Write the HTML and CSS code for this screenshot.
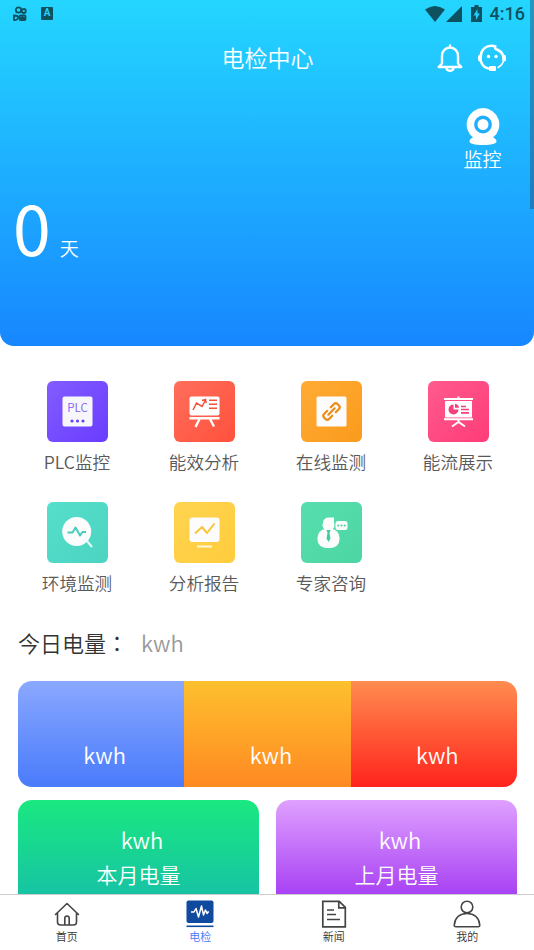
FILE: index.html
```html
<!DOCTYPE html>
<html lang="zh-CN">
<head>
  <meta charset="UTF-8" />
  <title>电检中心</title>
  <link rel="stylesheet" href="styles.css">
</head>
<body>
  <div class="scrollbar"></div>
  <main>
    <section class="hero">
      <div class="status">
        <svg class="status-app" viewBox="0 0 16 18" fill="none" stroke="#0e5261" stroke-width="1.8">
          <circle cx="6.5" cy="5" r="2.7"/><circle cx="11.8" cy="6" r="2"/>
          <rect x="7.5" y="10.5" width="6" height="4.5" rx="1"/><path d="M2 10.5q5 0 4 2.5t-4 2zM7 13h7M10.5 10.5v4"/>
        </svg>
        <span class="status-a">A</span>
        <svg class="status-wifi" viewBox="0 0 20 16"><path fill="#0e5261" d="M0 3.5Q10-3.5 20 3.5L10 16z"/></svg>
        <svg class="status-signal" viewBox="0 0 16 16"><path fill="#0e5261" d="M16 0v16H0z"/></svg>
        <svg class="status-battery" viewBox="0 0 11 17"><path fill="#0e5261" d="M3.5 0h4v2H11v15H0V2h3.5z"/><path fill="#22cdff" d="M6.5 4L2.5 10.5h2.4V15l4-6.5H6.5z"/></svg>
        <span class="time">4:16</span>
      </div>

      <header>
        <h1>电检中心</h1>
        <div class="actions">
          <svg width="28" height="28" viewBox="0 0 28 28" fill="none" stroke="#fff" stroke-width="2.4" stroke-linejoin="round" stroke-linecap="round">
            <path d="M14 1.5v1M6 19.5v-8a8 8 0 0 1 16 0v8l3.3 3.500H2.7z"/><path d="M10.5 24.5a3.6 3 0 0 0 7 0"/>
          </svg>
          <svg width="30" height="28" viewBox="0 0 30 28" fill="none" stroke="#fff" stroke-width="2.6" stroke-linecap="round">
            <path d="M3.6 12C4.5 5.5 9 1.8 14.5 1.8c2 0 3 .2 3.7.6-.5 2 .5 3 2.3 3.3 3 1.3 4.8 3.3 5.7 6.3M3.6 16.5c1.5 5.5 5.5 8.5 11.4 8.5"/>
            <path stroke-width="1.5" d="M26.5 17q-1 4-5.5 6.5"/>
            <path stroke-width="4" d="M3 12.8v2.7M27 12.8v2.7"/>
            <rect x="12" y="22" width="7" height="5" rx="1" fill="#fff" stroke="none"/>
            <circle cx="11.5" cy="12.500" r="1.7" fill="#fff" stroke="none"/><circle cx="19" cy="12.500" r="1.7" fill="#fff" stroke="none"/>
          </svg>
        </div>
      </header>

      <div class="monitor">
        <svg width="34" height="38" viewBox="0 0 34 38">
          <path fill="#fff" d="M17 0a16.5 16.5 0 0 1 10 29.500q3.500 1.500 3.500 3.700c0 2.500-5 3.800-13.500 3.800S3.500 35.700 3.500 33.200q0-2.200 3.500-3.700A16.500 16.500 0 0 1 17 0z"/>
          <circle cx="17" cy="16.500" r="7.200" fill="#fff" stroke="#20adfc" stroke-width="3.400"/>
        </svg>
        <span>监控</span>
      </div>

      <div class="days"><span class="num">0</span><span class="unit">天</span></div>
    </section>

    <section class="menu">
      <div class="item">
        <svg class="icon plc" viewBox="0 0 61 61">
          <rect x="15.5" y="15.5" width="30" height="30" rx="2" fill="#f7f7fb"/>
          <text x="30.5" y="31" text-anchor="middle" font-size="11.5" fill="#7c5cf5">PLC</text>
          <g fill="#6840f5"><circle cx="25" cy="40" r="1.6"/><circle cx="30.5" cy="40" r="1.6"/><circle cx="36" cy="40" r="1.6"/></g>
        </svg>
        <span>PLC监控</span>
      </div>
      <div class="item">
        <svg class="icon effect" viewBox="0 0 61 61" fill="none">
          <rect x="15.5" y="15.5" width="30" height="19" rx="2" fill="#fff"/>
          <path stroke="#fff" stroke-width="2.4" d="M15.5 37.3h30M25.5 38l-4 8M36 38l4 7.5"/>
          <path stroke="#f5523e" stroke-width="1.5" d="M19 29l3.5-7 5.5 3.500 3.500-6.500M28 19.500l3.500-1 .7 3.500M35 19.300h8M35 23.300h8M35 27.300h8"/>
        </svg>
        <span>能效分析</span>
      </div>
      <div class="item">
        <svg class="icon online" viewBox="0 0 61 61" fill="none">
          <rect x="15.5" y="15.5" width="30" height="30" rx="1.5" fill="#fcfcfc"/>
          <g stroke="#ed8b17" stroke-width="2.2" transform="rotate(-45 30.5 30.5)" stroke-linecap="round">
            <path d="M28 34h-4.5q-2.500 0-2.500-2.500v-2q0-2.500 2.500-2.500h4.500M33 27h4.500q2.500 0 2.500 2.500v2q0 2.500-2.500 2.500H33M26 30.500h9"/>
          </g>
        </svg>
        <span>在线监测</span>
      </div>
      <div class="item">
        <svg class="icon flow" viewBox="0 0 61 61" fill="none">
          <path stroke="#fff" stroke-width="2" d="M30.5 15.5v3M16 18h29M16 38.3h29M30.5 39v3M24 45.5l6.500-4.500 6.500 4.500"/>
          <rect x="17" y="20" width="27" height="16.5" fill="#fff"/>
          <path fill="#f2417c" d="M25.5 23.5v5h5a5 5 0 1 1-5-5zM27 22.8a4.5 4.5 0 0 1 4 4h-4z"/>
          <path stroke="#f2417c" stroke-width="1.7" d="M33 25.5h5M33 28.5h8M33 31.8h8"/>
        </svg>
        <span>能流展示</span>
      </div>
      <div class="item">
        <svg class="icon env" viewBox="0 0 61 61" fill="none">
          <circle cx="29.7" cy="29.5" r="14.5" fill="#fcfcfc"/>
          <path stroke="#e8faf6" stroke-width="2" d="M40 39l5 6"/>
          <path stroke="#43cdbb" stroke-width="1.9" stroke-linejoin="round" d="M20.5 30.5h5l3-5 4.500 8 2.500-3.500H39"/>
        </svg>
        <span>环境监测</span>
      </div>
      <div class="item">
        <svg class="icon report" viewBox="0 0 61 61" fill="none">
          <rect x="15.5" y="15.5" width="30" height="24.5" rx="3" fill="#fcfcfc"/>
          <path stroke="#fff7d8" stroke-width="2" d="M23 44.5h15"/>
          <path stroke="#f9c43a" stroke-width="2" stroke-linejoin="round" d="M21 31.5l7-6.500 5 6 7.500-9.500"/>
        </svg>
        <span>分析报告</span>
      </div>
      <div class="item">
        <svg class="icon expert" viewBox="0 0 61 61">
          <path fill="#fcfcfc" d="M33 15.5v5.500a6 5.500 0 1 1-11 0q0-5.500 6.500-5.500z"/>
          <rect x="16.5" y="27" width="22" height="19" rx="8.5" fill="#fcfcfc"/>
          <path fill="#42cc9b" d="M25.5 28h4l-1 3 1 5.500-2 3.500-2-3.500 1-5.500z"/>
          <rect x="34.5" y="19" width="12" height="9" rx="2.5" fill="#fcfcfc"/>
          <g fill="#4dd5a3"><circle cx="37.3" cy="23.5" r="1.1"/><circle cx="40.5" cy="23.5" r="1.1"/><circle cx="43.7" cy="23.5" r="1.1"/></g>
        </svg>
        <span>专家咨询</span>
      </div>
    </section>

    <div class="today">今日电量<span class="colon" lang="zh-TW">：</span><span class="value">kwh</span></div>

    <div class="strip">
      <div class="blue">&nbsp;kwh</div>
      <div class="orange">&nbsp;kwh</div>
      <div class="red">&nbsp;kwh</div>
    </div>

    <div class="months">
      <div class="month green"><p>&nbsp;kwh</p><p class="name">本月电量</p></div>
      <div class="month purple"><p>&nbsp;kwh</p><p class="name">上月电量</p></div>
    </div>
  </main>

  <nav>
    <div class="tab">
      <svg viewBox="0 0 28 28" fill="none" stroke="#444" stroke-width="1.6" stroke-linejoin="round" stroke-linecap="round">
        <path d="M2.5 14.5L14 3.5l11.500 11M4.500 13v9q0 3 3 3h13q3 0 3-3v-9M11.800 25v-6.500q0-2.500 2.200-2.500t2.200 2.500V25"/>
      </svg>
      <span>首页</span>
    </div>
    <div class="tab active">
      <svg viewBox="0 0 28 28" fill="none">
        <rect x=".5" y=".5" width="27" height="22.5" rx="2" fill="#0f4a9e"/>
        <path stroke="#0f4a9e" stroke-width="1.6" d="M.5 26.3h27"/>
        <path stroke="#fff" stroke-width="1.5" stroke-linejoin="round" d="M5 12h3l2-3.500 2.500 8.500 3-11 2 9 2-5 1.500 3.500 1-1.500h1"/>
      </svg>
      <span>电检</span>
    </div>
    <div class="tab">
      <svg viewBox="0 0 28 28" fill="none" stroke="#444" stroke-width="1.7">
        <path d="M2.800 1.300h16.500l6 6v19.500H2.800zM18.800 1.500v6.300h6.300M7 10h7M7 14.500h9M7 19.500h13"/>
      </svg>
      <span>新闻</span>
    </div>
    <div class="tab">
      <svg viewBox="0 0 28 28" fill="none" stroke="#444" stroke-width="1.6">
        <circle cx="14" cy="7" r="5.8"/><path d="M3 26.800q-2 0-1.700-2C2 17.500 7 13.500 14 13.500s12 4 12.700 11.300q.3 2-1.700 2z"/>
      </svg>
      <span>我的</span>
    </div>
  </nav>
</body>
</html>
```
FILE: styles.css
```css
* { box-sizing: border-box; }
body {
  margin: 0; height: 950px; background: #fff; color: #333;
  font-family: "Noto Sans CJK SC", sans-serif; font-weight: 350;
  display: flex; flex-direction: column; overflow: hidden;
}
main { flex: 1; min-height: 0; overflow: hidden; }
svg { display: block; flex: none; }
p { margin: 0; }

.scrollbar {
  position: absolute; top: 0; right: 0; z-index: 2;
  width: 4px; height: 209px; background: rgba(30, 70, 100, .42);
}

.hero {
  height: 346px; color: #fff; border-radius: 0 0 14px 14px;
  background: linear-gradient(#24d6ff, #1787ff);
}
.status {
  height: 27px; padding: 0 9px 0 12px;
  display: flex; align-items: center; color: #0e5261;
}
.status-app { width: 16px; height: 18px; }
.status-a {
  width: 12px; height: 13px; margin: 0 auto 0 13px; background: #0e5261; border-radius: 1px;
  color: #24d0fa; font: bold 10px/12px Roboto, sans-serif; text-align: center;
}
.status-wifi { width: 20px; height: 16px; margin-right: 1px; }
.status-signal { width: 16px; height: 16px; margin-right: 9px; }
.status-battery { width: 11px; height: 17px; margin-right: 8px; }
.time { font: 500 18px/27px Roboto, sans-serif; }

header {
  height: 61px; padding-right: 27px;
  display: grid; grid-template-columns: 1fr auto 1fr; align-items: center;
}
h1 {
  grid-column: 2; margin: -2px 0 0 28px;
  font-size: 23px; line-height: 30px; font-weight: 350;
}
.actions { display: flex; justify-content: flex-end; gap: 13px; }

.monitor {
  margin: 20px 32px 0 auto; width: 39px;
  display: flex; flex-direction: column; align-items: center;
  font-size: 19px; line-height: 26px; white-space: nowrap;
}
.days { display: flex; align-items: baseline; padding-left: 13px; margin-top: 6px; }
.num { font-size: 68px; line-height: 97px; font-weight: 400; }
.unit { font-size: 19px; margin-left: 9px; }

.menu {
  display: grid; grid-template-columns: repeat(4, 127px);
  row-gap: 15px; padding: 35px 0 0 13.5px;
}
.item {
  height: 106px; display: flex; flex-direction: column; align-items: center;
  font-size: 17.6px; line-height: 40px; color: #595959;
}
.icon { width: 61px; height: 61px; border-radius: 6px; }
.plc { background: linear-gradient(135deg, #825dff, #6a3cff); }
.effect { background: linear-gradient(135deg, #ff6e5c, #ff513c); }
.online { background: linear-gradient(135deg, #ffab35, #fa9b1c); }
.flow { background: linear-gradient(135deg, #ff5a8e, #ff3c78); }
.env { background: linear-gradient(135deg, #56dfcb, #4ad4c1); }
.report { background: linear-gradient(135deg, #ffd450, #ffcc3c); }
.expert { background: linear-gradient(135deg, #58deae, #4cd6a4); }

.today { margin: 9px 0 0 18px; font-size: 22px; line-height: 50px; height: 64px; }
.colon { font-family: "Noto Sans CJK TC", sans-serif; }
.value { margin-left: 13px; color: #999; }

.strip {
  display: flex; height: 106px; margin: 0 17px 0 18px;
  border-radius: 14px; overflow: hidden; color: #fff;
  font-size: 22px; line-height: 30px;
}
.strip div { flex: 1; padding: 58px 0 0 2px; text-align: center; }
.blue { background: linear-gradient(#8aa8ff, #497bfb); }
.orange { background: linear-gradient(#fec02e, #ff8922); }
.red { background: linear-gradient(#ff8c50, #ff241c); }

.months { display: flex; gap: 17px; margin: 13px 17px 0 18px; }
.month {
  flex: 1; height: 107px; padding-top: 22px; border-radius: 14px;
  text-align: center; color: #fff; font-size: 22px; line-height: 35px;
}
.month p:first-child { padding-left: 2px; }
.name { font-size: 21px; }
.green { background: linear-gradient(#1ae880, #16bfa8); }
.purple { background: linear-gradient(#dfa0ff, #a135f2); }

nav {
  height: 56px; display: flex; flex: none; background: #fff;
  border-top: 1px solid #ccc;
}
.tab {
  flex: 1; padding-top: 5px; display: flex; flex-direction: column; align-items: center;
  font-size: 11px; line-height: 16px;
}
.tab svg { width: 28px; height: 28px; }
.active { color: #4178f8; }
```
